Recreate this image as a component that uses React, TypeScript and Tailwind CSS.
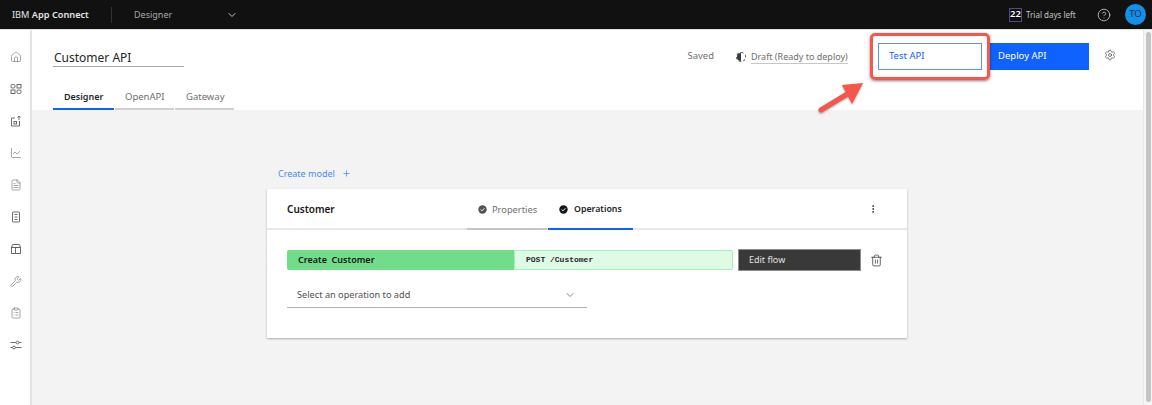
import React from 'react';
import {
  House, ChartLine, FileText, Wrench, ClipboardList, ChevronDown, CircleHelp,
  Settings, Plus, EllipsisVertical, Trash2,
} from 'lucide-react';

const font = { fontFamily: '"Noto Sans", "Open Sans", sans-serif' };

const AppsIcon = () => (
  <svg width="12" height="12" viewBox="0 0 12 12" fill="none" stroke="currentColor" strokeWidth="0.9">
    <rect x="1" y="1.5" width="4" height="3.5" rx="1.2" />
    <rect x="7" y="1.5" width="4" height="3.5" />
    <rect x="1" y="7" width="4" height="3.5" />
    <rect x="7" y="7" width="4" height="3.5" rx="1.2" />
  </svg>
);

const UploadBoxIcon = () => (
  <svg width="12" height="12" viewBox="0 0 12 12" fill="none" stroke="currentColor" strokeWidth="0.9">
    <path d="M5 3H1.5v8h8V6" />
    <rect x="4" y="6.5" width="2.5" height="2.5" />
    <path d="M9 5V1M7.5 2.5 9 1l1.5 1.5" />
  </svg>
);

const NotebookIcon = () => (
  <svg width="12" height="12" viewBox="0 0 12 12" fill="none" stroke="currentColor" strokeWidth="0.9">
    <rect x="2.5" y="1" width="7" height="10" rx="0.5" />
    <path d="M4.5 3.5h3M4.5 6h3M4.5 8.5h3" />
  </svg>
);

const LayoutIcon = () => (
  <svg width="12" height="12" viewBox="0 0 12 12" fill="none" stroke="currentColor" strokeWidth="0.9">
    <path d="M2.5 1.5h7l1 3h-9z" />
    <rect x="1.5" y="4.5" width="9" height="6" />
    <path d="M5.5 4.5v6" />
  </svg>
);

const SlidersIcon = () => (
  <svg width="12" height="12" viewBox="0 0 12 12" fill="none" stroke="currentColor" strokeWidth="0.9">
    <path d="M.5 3.5H6M9 3.5h2.5M.5 8.5H2.5M5.5 8.5h6" />
    <circle cx="7.5" cy="3.5" r="1.4" />
    <circle cx="4" cy="8.5" r="1.4" />
  </svg>
);

const CheckDot = ({ color }: { color: string }) => (
  <svg width="9" height="9" viewBox="0 0 9 9" className="shrink-0">
    <circle cx="4.5" cy="4.5" r="4.2" fill={color} />
    <path d="M2.6 4.6 4 5.9l2.4-2.7" fill="none" stroke="#ffffff" strokeWidth="0.9" />
  </svg>
);

const navIcons = [
  <House size={12} strokeWidth={1.1} />,
  <AppsIcon />,
  <UploadBoxIcon />,
  <ChartLine size={12} strokeWidth={1.1} />,
  <FileText size={12} strokeWidth={1.1} />,
  <NotebookIcon />,
  <LayoutIcon />,
  <Wrench size={13} strokeWidth={1.1} />,
  <ClipboardList size={12} strokeWidth={1.1} />,
  <SlidersIcon />,
];

export default function App() {
  return (
    <div className="relative w-[1152px] h-[405px] overflow-hidden bg-[#f3f3f3] flex flex-col" style={font}>
      {/* Top bar */}
      <header className="h-[30px] shrink-0 bg-[#111111] border-b border-[#e0e0e0] flex items-center text-[#d0d0d0]">
        <div className="pl-3 w-[111px] text-[9.2px] whitespace-nowrap text-[#e4e4e4]">
          IBM <span className="font-semibold">App Connect</span>
        </div>
        <div className="w-px h-4 bg-[#333333]" />
        <div className="pl-[22px] w-[114px] text-[9px] text-[#a8a8a8]">Designer</div>
        <ChevronDown size={12} className="text-[#c6c6c6]" />
        <div className="ml-auto flex items-center">
          <span className="w-[13px] h-[14px] border border-[#4d4a8a] flex items-center justify-center text-[9.5px] font-semibold text-white">22</span>
          <span className="ml-1 w-[51px] whitespace-nowrap text-[8px] text-[#c6c6c6]">Trial days left</span>
          <CircleHelp size={14} strokeWidth={1.25} className="ml-5 text-[#e0e0e0]" />
          <span className="ml-[14px] mr-[6px] w-[21px] h-[21px] rounded-full bg-[#1192e8] flex items-center justify-center text-[9.5px] text-[#0b2a4a]">TO</span>
        </div>
      </header>

      <div className="flex flex-1 min-h-0">
        {/* Side nav */}
        <nav className="w-[32px] shrink-0 bg-white border-r-2 border-[#e4e4e4] pt-[21px] flex flex-col gap-5 pl-[10px] text-[#5f5f5f]">
          {navIcons.map((icon, i) => (
            <div key={i} className="h-3 w-3 flex items-center justify-center">{icon}</div>
          ))}
        </nav>

        <main className="flex-1 min-w-0 flex flex-col">
          {/* Page header */}
          <div className="h-[80px] shrink-0 bg-white flex flex-col pl-[21px]">
            <div className="flex items-start">
              <div className="w-[131px] mt-[20px] border-b border-[#a8a8a8] h-[17px] text-[12px] leading-[16px] text-[#262626] pl-[1px] whitespace-nowrap">Customer API</div>
              <div className="ml-auto flex items-center mt-[13px] h-[27px] text-[9.5px] text-[#6f6f6f]">
                <span>Saved</span>
                <span className="ml-[22px] w-[10px] h-[10px] rounded-full border border-dashed border-[#525252] overflow-hidden flex">
                  <span className="w-1/2 bg-[#393939]" />
                </span>
                <span className="ml-[5px] w-[97px] text-[9px] border-b border-[#c6c6c6] leading-[13px] whitespace-nowrap">Draft (Ready to deploy)</span>
                <button className="ml-[30px] w-[104px] h-[27px] bg-white border border-[#5b8ffc] text-left pl-[10px] text-[#0f62fe]">Test API</button>
                <button className="ml-[7px] w-[100px] h-[27px] bg-[#0f62fe] text-left pl-[9px] text-white">Deploy API</button>
                <Settings size={12} strokeWidth={1.25} className="ml-[15px] mr-[27px] -mt-1 text-[#393939]" />
              </div>
            </div>
            <div className="mt-auto flex gap-px text-[9.5px]">
              <div className="w-[61px] h-[27px] pl-[11px] pt-[7px] border-b-2 border-[#0f62fe] text-[9px] font-semibold text-[#262626]">Designer</div>
              <div className="w-[59px] h-[27px] pl-[10px] pt-[7px] border-b-2 border-[#d0d0d0] text-[#6f6f6f]">OpenAPI</div>
              <div className="w-[59px] h-[27px] pl-[11px] pt-[7px] border-b-2 border-[#d0d0d0] text-[#6f6f6f]">Gateway</div>
            </div>
          </div>

          {/* Canvas */}
          <div className="flex-1 pl-[235px] pt-[57px]">
            <div className="flex items-center h-[13px] pl-[11px] text-[9px] text-[#4589ff]">
              Create model
              <Plus size={9} className="ml-[7px]" />
            </div>
            <section className="mt-[9px] w-[640px] h-[149px] bg-white shadow-[0_1px_2px_rgba(0,0,0,0.3)]">
              <div className="h-[41px] border-b-2 border-[#e8e8e8] flex pl-5">
                <span className="w-[48px] whitespace-nowrap pt-[13px] text-[10px] font-semibold text-[#161616]">Customer</span>
                <div className="ml-[132px] w-[80px] h-[41px] border-b-2 border-[#c6c6c6] flex items-center pt-[2px] pl-[11px] gap-[5px] text-[9.3px] text-[#6f6f6f]">
                  <CheckDot color="#525252" />
                  Properties
                </div>
                <div className="ml-px w-[85px] h-[41px] border-b-2 border-[#0f62fe] flex items-center pt-[2px] pl-[11px] gap-[6px] text-[8.8px] font-semibold text-[#262626]">
                  <CheckDot color="#161616" />
                  Operations
                </div>
                <EllipsisVertical size={10} className="ml-auto mr-[29px] mt-[15px] text-[#262626]" />
              </div>
              <div className="pl-5 pt-[19px]">
                <div className="flex items-center">
                  <div className="w-[227px] h-5 rounded-l-[2px] bg-[#71dd8a] pl-[11px] flex items-center text-[9px] font-semibold text-[#161616] whitespace-pre">Create  Customer</div>
                  <div className="w-[219px] h-5 rounded-r-[2px] bg-[#defbe6] border border-[#a7f0ba] pl-[11px] flex items-center text-[8px] text-[#262626] whitespace-nowrap font-['Liberation_Mono',monospace] font-semibold">POST /Customer</div>
                  <button className="ml-[5px] w-[123px] h-[22px] bg-[#393939] border border-[#8d8d8d] text-left pl-[10px] text-[9px] text-[#e0e0e0]">Edit flow</button>
                  <Trash2 size={13} strokeWidth={1.25} className="ml-[9px] text-[#262626]" />
                </div>
                <div className="mt-[12px] w-[300px] h-[25px] border-b border-[#b0b0b0] flex items-center pl-[10px] pr-[11px] text-[9.2px] text-[#525252]">
                  Select an operation to add
                  <ChevronDown size={12} strokeWidth={1.25} className="ml-auto text-[#393939]" />
                </div>
              </div>
            </section>
          </div>
        </main>

        {/* Scrollbar */}
        <div className="w-[9px] shrink-0 bg-[#f5f5f5] border-l border-[#e8e8e8] pt-[2px] pl-[2px] pr-px">
          <div className="h-[370px] rounded bg-[#c4c4c4]" />
        </div>
      </div>

      {/* Annotation */}
      <div className="absolute left-[870px] top-[33px] w-[120px] h-[47px] border-[3px] border-[#f4574c] rounded-[5px] shadow-[0_1px_3px_rgba(0,0,0,0.5)]" />
      <svg className="absolute left-[815px] top-[80px] drop-shadow-[0_1px_1px_rgba(0,0,0,0.35)]" width="52" height="36" viewBox="0 0 52 36" fill="none">
        <path d="M6 30 34 13" stroke="#f4574c" strokeWidth="5" strokeLinecap="round" />
        <path d="M27 5 48 3 37 24Z" fill="#f4574c" />
      </svg>
    </div>
  );
}
